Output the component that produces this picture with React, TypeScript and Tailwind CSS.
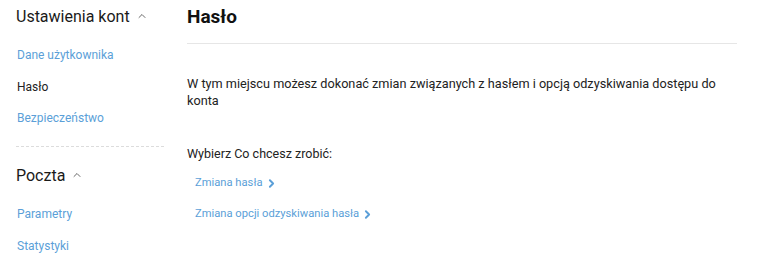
import { ChevronRight, ChevronUp } from "lucide-react";

const font = { fontFamily: "Roboto, 'Liberation Sans', sans-serif" };

function SectionHeader({ label }: { label: string }) {
  return (
    <div className="flex items-center gap-[6px] text-[16px] leading-[20px] text-[#1a1a1a]">
      <span>{label}</span>
      <ChevronUp size={12} strokeWidth={1.6} className="text-[#444] mt-[-3px]" />
    </div>
  );
}

function NavLink({ label, active }: { label: string; active?: boolean }) {
  return (
    <a className={`block text-[12px] leading-[16px] ${active ? "text-[#222]" : "text-[#5b9fd8]"}`}>{label}</a>
  );
}

function ActionLink({ label }: { label: string }) {
  return (
    <a className="flex items-center gap-[2px] text-[11.2px] leading-[14px] text-[#5b9fd8]">
      {label}
      <ChevronRight size={13} strokeWidth={3.5} />
    </a>
  );
}

export default function App() {
  return (
    <div className="flex w-[768px] h-[261px] bg-white overflow-hidden" style={font}>
      <aside className="w-[148px] ml-[16px] shrink-0 pt-[7px]">
        <SectionHeader label="Ustawienia kont" />
        <div className="flex flex-col gap-[15.5px] mt-[20px] pl-px">
          <NavLink label="Dane użytkownika" />
          <NavLink label="Hasło" active />
          <NavLink label="Bezpieczeństwo" />
        </div>
        <div className="border-t border-dashed border-[#dcdcdc] mt-[20px]" />
        <div className="mt-[19px]">
          <SectionHeader label="Poczta" />
        </div>
        <div className="flex flex-col gap-[16px] mt-[20px] pl-px">
          <NavLink label="Parametry" />
          <NavLink label="Statystyki" />
        </div>
      </aside>
      <main className="ml-[23px] w-[550px] pt-[5px]">
        <h1 className="text-[19px] leading-[24px] font-bold text-[#111]">Hasło</h1>
        <div className="border-t border-[#e6e6e6] mt-[14px]" />
        <p className="mt-[31px] text-[12.7px] leading-[17px] text-[#222]">
          W tym miejscu możesz dokonać zmian związanych z hasłem i opcją odzyskiwania dostępu do konta
        </p>
        <p className="mt-[36px] text-[12.5px] leading-[17px] text-[#222]">Wybierz Co chcesz zrobić:</p>
        <div className="flex flex-col gap-[17px] mt-[14px] pl-[8px]">
          <ActionLink label="Zmiana hasła" />
          <ActionLink label="Zmiana opcji odzyskiwania hasła" />
        </div>
      </main>
    </div>
  );
}
